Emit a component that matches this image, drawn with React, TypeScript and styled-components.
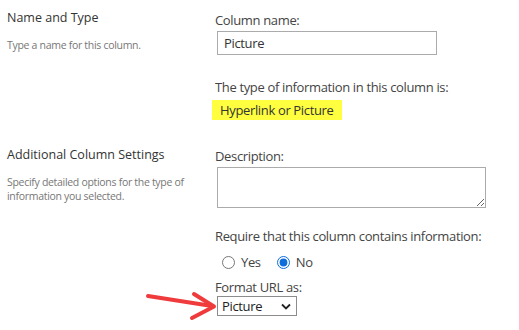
import React from "react";
import styled, { createGlobalStyle } from "styled-components";

const Global = createGlobalStyle`
  html, body { margin: 0; padding: 0; background: #fff; }
  body { font-family: "Segoe UI", "Open Sans", "Noto Sans", sans-serif; color: #444; }
`;

const Page = styled.div`
  position: relative;
  width: 519px;
  height: 330px;
  overflow: hidden;
`;

const Section = styled.section<{ $h: number }>`
  display: grid;
  grid-template-columns: 215px 1fr;
  height: ${(p) => p.$h}px;
`;

const Side = styled.div<{ $top: number }>`
  padding: ${(p) => p.$top}px 0 0 7px;
`;

const SideTitle = styled.div`
  font-size: 12.5px;
  line-height: 17px;
  color: #333;
`;

const SideText = styled.div`
  margin-top: 12px;
  font-size: 10.5px;
  letter-spacing: -0.3px;
  line-height: 14px;
  color: #777;
  width: 190px;
`;

const Main = styled.div<{ $top: number }>`
  padding-top: ${(p) => p.$top}px;
  display: flex;
  flex-direction: column;
  align-items: flex-start;
`;

const Label = styled.div<{ $mt?: number }>`
  font-size: 13px;
  letter-spacing: -0.35px;
  line-height: 18px;
  color: #444;
  margin-top: ${(p) => p.$mt ?? 0}px;
`;

const TextBox = styled.div`
  margin: 2px 0 0 2px;
  width: 220px;
  height: 24px;
  box-sizing: border-box;
  border: 1px solid #ababab;
  padding: 0 6px;
  font-size: 13px;
  letter-spacing: -0.35px;
  line-height: 22px;
  color: #333;
`;

const Highlight = styled.div`
  margin: 4px 0 0 -3px;
  background: #ffff3f;
  width: 130px;
  height: 20px;
  box-sizing: border-box;
  padding-left: 8px;
  font-size: 13px;
  letter-spacing: -0.35px;
  line-height: 20px;
  color: #333;
`;

const Area = styled.textarea`
  margin: 2px 0 0 2px;
  width: 269px;
  height: 41px;
  box-sizing: border-box;
  border: 1px solid #ababab;
  border-radius: 0;
  font-family: inherit;
  outline: none;
`;

const RadioRow = styled.div`
  display: flex;
  align-items: center;
  margin: 8px 0 0 7px;
  height: 18px;
`;

const RadioLabel = styled.label<{ $mr?: number }>`
  display: flex;
  align-items: center;
  font-size: 13px;
  letter-spacing: -0.35px;
  color: #444;
  margin-right: ${(p) => p.$mr ?? 0}px;
`;

const Radio = styled.input`
  width: 13px;
  height: 13px;
  margin: 0 6px 0 0;
  accent-color: #0f6cdb;
`;

const Select = styled.div`
  margin: 0 0 0 2px;
  width: 80px;
  height: 20px;
  box-sizing: border-box;
  border: 1px solid #8c8c8c;
  display: flex;
  align-items: center;
  justify-content: space-between;
  padding: 0 5px 0 4px;
  font-size: 13px;
  letter-spacing: -0.35px;
  color: #222;
`;

const Arrow = styled.svg`
  position: absolute;
  left: 140px;
  top: 287px;
`;

export default function App() {
  return (
    <Page>
      <Global />
      <Section $h={140}>
        <Side $top={9}>
          <SideTitle>Name and Type</SideTitle>
          <SideText>Type a name for this column.</SideText>
        </Side>
        <Main $top={11}>
          <Label>Column name:</Label>
          <TextBox>Picture</TextBox>
          <Label $mt={23}>The type of information in this column is:</Label>
          <Highlight>Hyperlink or Picture</Highlight>
        </Main>
      </Section>
      <Section $h={190}>
        <Side $top={6}>
          <SideTitle>Additional Column Settings</SideTitle>
          <SideText>Specify detailed options for the type of information you selected.</SideText>
        </Side>
        <Main $top={7}>
          <Label>Description:</Label>
          <Area defaultValue="" />
          <Label $mt={19}>Require that this column contains information:</Label>
          <RadioRow>
            <RadioLabel $mr={16}>
              <Radio type="radio" name="req" />
              Yes
            </RadioLabel>
            <RadioLabel>
              <Radio type="radio" name="req" defaultChecked />
              No
            </RadioLabel>
          </RadioRow>
          <Label $mt={7}>Format URL as:</Label>
          <Select>
            <span>Picture</span>
            <svg width="10" height="7" viewBox="0 0 10 7">
              <path d="M1 1.5 L5 5.5 L9 1.5" fill="none" stroke="#222" strokeWidth="1.8" />
            </svg>
          </Select>
        </Main>
      </Section>
      <Arrow width="80" height="36" viewBox="0 0 80 36">
        <path d="M8 9 L72 19" stroke="#ef3b3b" strokeWidth="4" strokeLinecap="round" fill="none" />
        <path d="M54 7 L74 19.5 L52 31" stroke="#ef3b3b" strokeWidth="4" strokeLinecap="round" strokeLinejoin="round" fill="none" />
      </Arrow>
    </Page>
  );
}
